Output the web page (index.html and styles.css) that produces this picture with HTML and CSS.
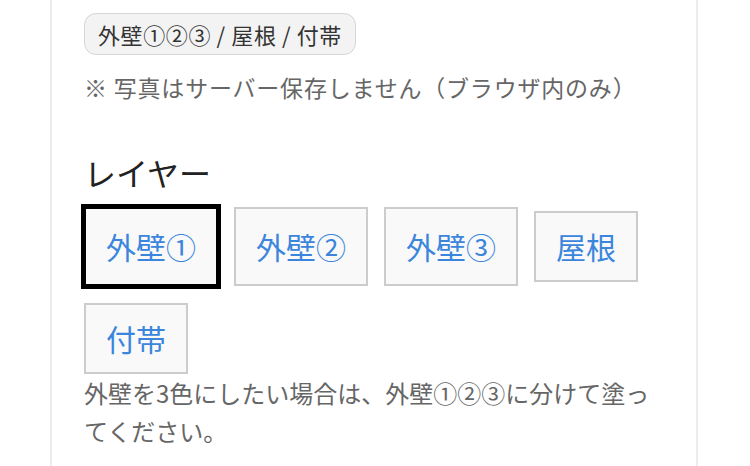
FILE: index.html
```html
<!DOCTYPE html>
<html lang="ja">
<head>
<meta charset="utf-8">
<title>レイヤー</title>
<link rel="stylesheet" href="styles.css">
</head>
<body>
<div class="card">
  <div class="pill">外壁①②③ / 屋根 / 付帯</div>
  <p class="note">※ 写真はサーバー保存しません（ブラウザ内のみ）</p>
  <h2 class="heading">レイヤー</h2>
  <div class="layers">
    <button class="layer-btn tall selected">外壁①</button>
    <button class="layer-btn tall">外壁②</button>
    <button class="layer-btn tall">外壁③</button>
    <button class="layer-btn">屋根</button>
    <button class="layer-btn">付帯</button>
  </div>
  <p class="hint">外壁を3色にしたい場合は、外壁①②③に分けて塗ってください。</p>
</div>
</body>
</html>
```

FILE: styles.css
```css
html, body {
  margin: 0;
  padding: 0;
  background: #fff;
}
body {
  font-family: "Noto Sans CJK JP", "Noto Sans", sans-serif;
  height: 466px;
  overflow: hidden;
}
.card {
  margin-left: 50px;
  width: 648px;
  box-sizing: border-box;
  min-height: 466px;
  border-left: 2px solid #ececec;
  border-right: 2px solid #ececec;
  padding: 13px 32px 0 32px;
}
.pill {
  display: inline-block;
  font-size: 22px;
  line-height: 28px;
  letter-spacing: 0.6px;
  color: #333;
  background: #f3f3f3;
  border: 1.5px solid #d6d6d6;
  border-radius: 12px;
  padding: 6px 13px;
}
.note {
  margin: 14px 0 0 0;
  font-size: 23px;
  line-height: 36px;
  letter-spacing: 0.8px;
  color: #666;
}
.heading {
  margin: 46px 0 0 0;
  font-size: 32px;
  font-weight: normal;
  line-height: 42px;
  color: #222;
}
.layers {
  margin-top: 14px;
  display: flex;
  flex-wrap: wrap;
  align-items: center;
  gap: 17px 16px;
}
.layer-btn {
  font-family: inherit;
  font-size: 30px;
  line-height: 43px;
  color: #3b86dc;
  background: #f9f9f9;
  border: 2px solid #cccccc;
  border-radius: 0;
  padding: 12px 20px;
  margin: 0;
}
.layer-btn.tall {
  padding: 16px 20px;
}
.layer-btn.selected {
  border-color: #000;
  box-shadow: 0 0 0 3px #000;
}
.hint {
  margin: 0;
  font-size: 24px;
  line-height: 38px;
  color: #666;
}
```
